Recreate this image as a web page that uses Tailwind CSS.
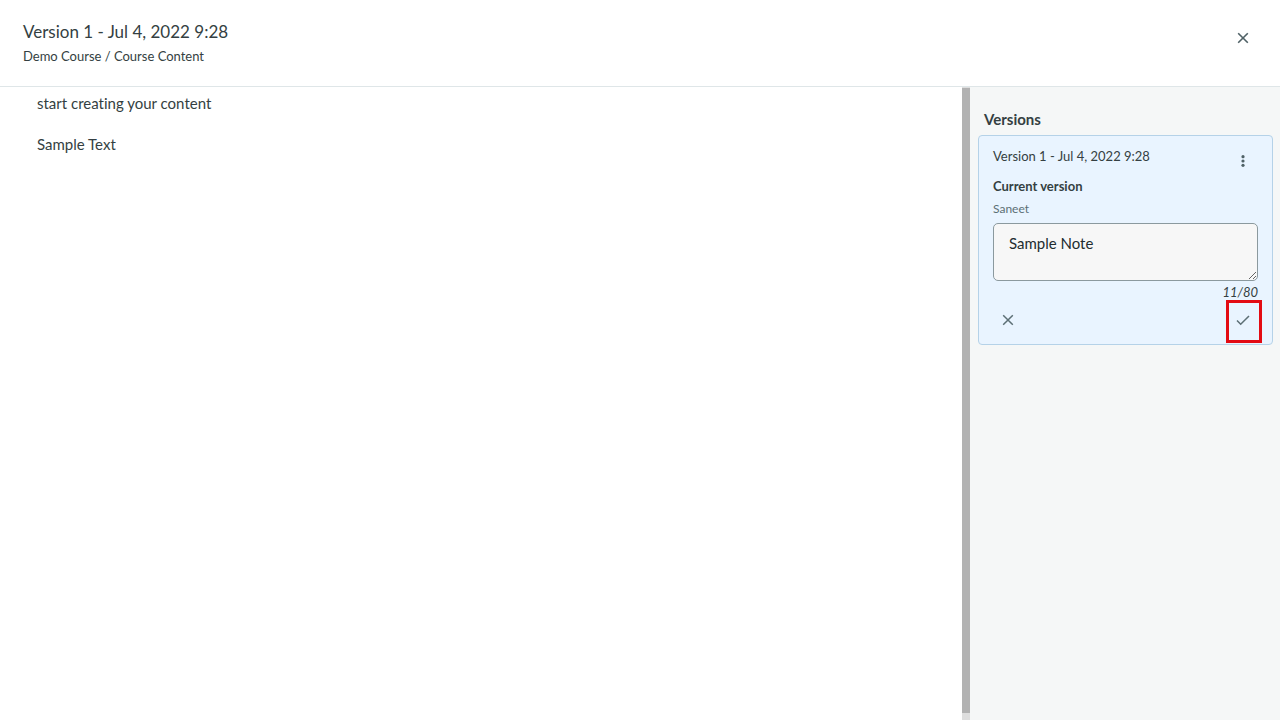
<!DOCTYPE html>
<html lang="en" class="h-full">
<head>
<meta charset="utf-8">
<meta name="viewport" content="width=device-width, initial-scale=1">
<title>Version history</title>
<script src="https://cdn.jsdelivr.net/npm/@tailwindcss/browser@4"></script>
</head>
<body class="flex h-full flex-col overflow-hidden bg-white font-['Lato',sans-serif] text-[#343f42] [font-variant-ligatures:none]">
<header class="flex items-start justify-between border-b border-[#dfe6e8] py-5 pr-[21px] pl-[23px]">
  <div>
    <h1 class="text-[17px] leading-6">Version 1 - Jul 4, 2022 9:28</h1>
    <p class="pt-0.5 text-[13px] leading-5">Demo Course / Course Content</p>
  </div>
  <button type="button" aria-label="Close" class="mt-0.5 flex size-8 items-center justify-center text-[#4f6166]">
    <svg class="size-3" viewBox="0 0 12 12" fill="none" stroke="currentColor" stroke-width="1.6"><path d="M1.2 1.2l9.6 9.6M10.8 1.2l-9.6 9.6"/></svg>
  </button>
</header>
<div class="flex min-h-0 flex-1">
  <main class="flex-1 space-y-[17px] pt-1 pr-9 pl-[37px] text-[15px] leading-6">
    <p>start creating your content</p>
    <p>Sample Text</p>
  </main>
  <!-- scroll track -->
  <div class="w-2 bg-[#dedede] pt-px pb-[7px]">
    <div class="h-full bg-[#b2b2b2]"></div>
  </div>
  <aside class="w-[310px] bg-[#f5f7f7] pt-5 pr-[7px] pl-2">
    <h2 class="px-1.5 text-[15px] leading-6 font-bold">Versions</h2>
    <section class="mt-1 rounded border border-[#b5d2e8] bg-[#e9f4ff] px-3.5 pt-2.5 pb-2">
      <div class="flex items-start justify-between">
        <div>
          <h3 class="text-[13px] leading-5">Version 1 - Jul 4, 2022 9:28</h3>
          <p class="pt-2.5 text-[13px] leading-5 font-bold">Current version</p>
          <p class="pt-[5px] text-xs leading-4 text-[#5c6f75]">Saneet</p>
        </div>
        <button type="button" aria-label="More options" class="flex h-[30px] w-[30px] items-center justify-center text-[#4f6166]">
          <svg class="h-3 w-1" viewBox="0 0 4 12" fill="currentColor"><circle cx="2" cy="1.7" r="1.6"/><circle cx="2" cy="6" r="1.6"/><circle cx="2" cy="10.3" r="1.6"/></svg>
        </button>
      </div>
      <textarea aria-label="Note" maxlength="80" class="mt-1.5 block h-[58px] w-full resize-y overflow-hidden rounded-[5px] border border-[#8b999e] bg-[#f7f7f7] px-[15px] py-[7px] text-[15px] leading-6 text-[#222c2f]">Sample Note</textarea>
      <p class="pt-px text-right text-[13px] leading-5 italic">11/80</p>
      <div class="flex items-center justify-between pt-0.5 text-[#5c6f75]">
        <button type="button" aria-label="Cancel" class="flex h-8 w-[30px] items-center justify-center">
          <svg class="size-3" viewBox="0 0 12 12" fill="none" stroke="currentColor" stroke-width="1.5"><path d="M1.2 1.2l9.6 9.6M10.8 1.2l-9.6 9.6"/></svg>
        </button>
        <button type="button" aria-label="Save note" class="relative flex h-8 w-[30px] items-center justify-center">
          <svg class="h-3 w-3.5" viewBox="0 0 14 12" fill="none" stroke="currentColor" stroke-width="1.5"><path d="M1 6.5l3.7 3.8L13 2"/></svg>
          <!-- highlight frame -->
          <span class="pointer-events-none absolute -top-1 -right-1 -bottom-[7px] -left-0.5 border-3 border-[#e30b13]"></span>
        </button>
      </div>
    </section>
  </aside>
</div>
</body>
</html>
